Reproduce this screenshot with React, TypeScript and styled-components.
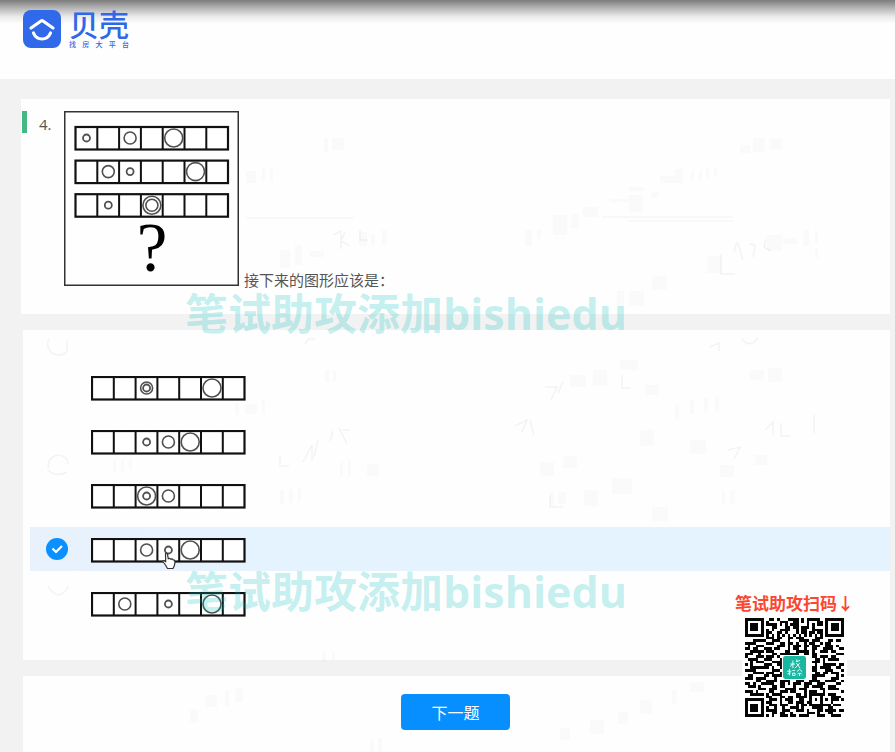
import React, { useState } from "react";
import styled, { createGlobalStyle } from "styled-components";

const GlobalStyle = createGlobalStyle`
  * { box-sizing: border-box; }
  body {
    margin: 0;
    background: #f2f2f2;
    color: #555;
    font-family: "Open Sans", "Noto Sans CJK SC", sans-serif;
  }
`;

const Page = styled.div`
  position: relative;
  min-height: 100vh;
  display: flex;
  flex-direction: column;
  overflow: hidden;
`;

const Header = styled.header`
  height: 79px;
  padding: 10px 23px;
  display: flex;
  align-items: flex-start;
  gap: 8px;
  background: linear-gradient(#7c7c7c 0, #b4b4b4 8px, #ececec 17px, #fefefe 24px);
`;

const Brand = styled.div`
  display: flex;
  flex-direction: column;
  gap: 3px;
  width: 60px;
  color: #2f68e8;
  font-family: "Noto Sans CJK SC", sans-serif;
`;

const BrandName = styled.span`
  font-size: 30px;
  line-height: 27px;
  font-weight: 500;
`;

const BrandLine = styled.span`
  display: flex;
  justify-content: space-between;
  font-size: 7px;
  line-height: 8px;
  font-weight: 500;
`;

const Main = styled.main`
  flex: 1;
  display: flex;
  flex-direction: column;
  gap: 16px;
  padding: 20px 5px 0 23px;
`;

const Card = styled.section`
  background: #fefefe;
`;

const QuestionCard = styled(Card)`
  display: flex;
  align-items: flex-start;
  margin-left: -2px;
  padding: 12px 16px 8px 1px;
  min-height: 215px;
`;

const Marker = styled.span`
  width: 5px;
  height: 22px;
  background: #43b883;
`;

const Number = styled.span`
  width: 37px;
  padding-left: 12px;
  font-size: 15px;
  line-height: 26px;
`;

const Prompt = styled.p`
  margin: 0;
  font-size: 15px;
  line-height: 20px;
  font-family: "Noto Sans CJK SC", sans-serif;

  svg { margin-right: 5px; }
`;

const OptionsCard = styled(Card)`
  padding: 35px 0;
  min-height: 330px;
`;

const Options = styled.div`
  display: flex;
  flex-direction: column;
  gap: 10px;
  padding-left: 7px;
`;

const Option = styled.label<{ $selected: boolean }>`
  display: flex;
  align-items: center;
  height: 44px;
  padding: 3px 0 0 16px;
  gap: 23px;
  cursor: pointer;
  background: ${(p) => (p.$selected ? "linear-gradient(90deg, #e8f1fc, #e5f3ff 25%)" : "transparent")};
`;

const Radio = styled.input`
  appearance: none;
  width: 22px;
  height: 22px;
  margin: 0 0 3px;
  border-radius: 50%;

  &:checked {
    background: #0b91ff
      url("data:image/svg+xml,%3Csvg xmlns='http://www.w3.org/2000/svg' viewBox='0 0 22 22'%3E%3Cpath d='M6.5 10.5l3.5 3.500 6-6' fill='none' stroke='white' stroke-width='2.2'/%3E%3C/svg%3E");
  }
`;

const StripSvg = styled.svg`
  display: block;
`;

const Footer = styled(Card)`
  flex: 1;
  display: flex;
  justify-content: center;
  padding: 18px 2px 20px 0;
`;

const NextButton = styled.button`
  width: 109px;
  height: 36px;
  border: 0;
  border-radius: 4px;
  background: #078fff;
  color: #fff;
  font: 16px "Noto Sans CJK SC", sans-serif;
  cursor: pointer;
`;

const Watermark = styled.div<{ $top: number }>`
  position: absolute;
  top: ${(p) => p.$top}px;
  left: 185px;
  font-size: 43px;
  line-height: 60px;
  font-weight: 700;
  white-space: nowrap;
  color: rgba(0, 193, 188, 0.24);
  pointer-events: none;
`;

const Promo = styled.aside`
  position: absolute;
  top: 592px;
  right: 41px;
  display: flex;
  flex-direction: column;
  align-items: center;
  color: #fb4630;
  font-family: "Noto Sans CJK SC", sans-serif;
  font-size: 17px;
  line-height: 22px;
  font-weight: 700;
`;

const QrFrame = styled.div`
  padding: 4px 3px;
  background: #fff;

  svg { display: block; }
`;

const Cursor = styled.svg`
  position: absolute;
  left: 161px;
  top: 552px;
  pointer-events: none;
`;

const Traces = styled.svg`
  position: absolute;
  left: 0;
  top: 0;
  pointer-events: none;
`;

type Ring = [cell: number, radius: number];
const S = 3.5;
const M = 6;
const L = 9;

const puzzle: Ring[][] = [
  [[0, S], [2, M], [4, L]],
  [[1, M], [2, S], [5, L]],
  [[1, S], [3, M], [3, L]],
];

const options: Ring[][] = [
  [[2, S], [2, M], [5, L]],
  [[2, S], [3, M], [4, L]],
  [[2, S], [2, L], [3, M]],
  [[2, M], [3, S], [4, L]],
  [[1, M], [3, S], [5, L]],
];

function StripShape({ rings }: { rings: Ring[] }) {
  return (
    <g fill="none">
      <rect x="1" y="1" width="152.5" height="22.500" fill="#fff" stroke="#111" strokeWidth="2.200" />
      <path
        d={[1, 2, 3, 4, 5, 6].map((i) => `M${1 + i * 21.8} 1v22`).join("")}
        stroke="#111"
        strokeWidth="2"
      />
      {rings.map(([cell, r], i) => (
        <circle key={i} cx={12 + cell * 21.8} cy="12" r={r} stroke="#505050" strokeWidth={r === S ? 1.8 : 1.6} />
      ))}
    </g>
  );
}

function Puzzle() {
  return (
    <svg width="175" height="175" role="img" aria-label="图形推理题">
      <rect x="0.75" y="0.75" width="173.5" height="173.5" fill="#fefefe" stroke="#333" strokeWidth="1.5" />
      {puzzle.map((rings, i) => (
        <g key={i} transform={`translate(10.500 ${15 + i * 33.6})`}>
          <StripShape rings={rings} />
        </g>
      ))}
      <text x="88" y="160" textAnchor="middle" fontFamily="Liberation Serif, serif" fontSize="69" fill="#000">
        ?
      </text>
    </svg>
  );
}

const qrRows = [
  "#######..##.#...####.#.#####..#######",
  "#.....#.#....###..##.#.#...##.#.....#",
  "#.###.#.####.#.#.###...#.#.##.#.###.#",
  "#.###.#...##...##.##.###.#....#.###.#",
  "#.###.#.#.#..####..#.##..####.#.###.#",
  "#.....#.##..##.#...#.##.##.##.#.....#",
  "#######.#.#.#.#.#.#.#.#.#.#.#.#######",
  "........###.##..##.###....###........",
  "...#####..###...#...####.###...##.##.",
  "####....###..##.##.#..#.##..#.##.....",
  ".#..###.....###.#.###.##.###..###.#..",
  "##.##..###.##...#.##..#..##..####..##",
  "..#####.###....##..#####.#..###.##...",
  "###..#....##.#######..##.##.......###",
  "#...###.###.#............##.###.##...",
  ".####..###...#............##.#.####..",
  "..#.###...####...........###.#.......",
  "#.#....###..##............#..#####.##",
  "..#######.#..#...........##.####..##.",
  "####......###............##...###...#",
  "...####.###..#............##.##.###..",
  ".##....##.####...........#####....#.#",
  "###.####...#.............##.....###..",
  "....##..####.####..###..####..####..#",
  "##.#..#####..##.#.###.###..###....##.",
  ".###.#....##.##...#...##.####..###...",
  ".....###.###...####.###.....##.####..",
  "###.#....##..###.##...#.###..#......#",
  "..#####.#.####.....##.#.######.###...",
  "........##...##.##.####.#...#...####.",
  "#######..###.#.###..##..#.#.#.#.###.#",
  "#.....#.##...#..##.###.##...#...#....",
  "#.###.#..###.###...#.##.########.###.",
  "#.###.#.#..#..#..###.#...####..##....",
  "#.###.#.####..###..###.#...##.####.##",
  "#.....#...##.##..#.....###.#...##....",
  "#######.#.#..###.##.####...###..####.",
];

function QrCode() {
  const d = qrRows
    .map((row, y) => row.split("").map((c, x) => (c === "#" ? `M${x} ${y}h1v1h-1z` : "")).join(""))
    .join("");
  return (
    <svg width="99" height="99" viewBox="0 0 37 37" role="img" aria-label="二维码">
      <path d={d} fill="#050505" shapeRendering="crispEdges" />
      <rect x="13.8" y="13.8" width="9.4" height="9.4" rx="1.2" fill="#fff" />
      <rect x="14.2" y="14.2" width="8.6" height="8.6" rx="0.9" fill="#18b79f" />
      <path
        d="M16.900 17.200h1.800M17.900 15.900v2.800M17.800 17.200l-.9 1M19 16.300l1.600-.4M19.300 15.500l.2.800M19.200 16.800l1.400 2M20.500 16.900l-1.900 1.900M15.800 19.900h1.500M16.600 19v2.500M15.900 20.900l1.200-.4M17.700 19.600h1M17.800 20.600h.9v.9h-.9zM19.400 20l1-.8 1 .9M19.700 20.700h1.400M20.400 20.700v1M19.500 21.200v.2M21.300 21.200v.2"
        fill="none"
        stroke="#e9fffb"
        strokeWidth="0.36"
      />
    </svg>
  );
}

const traceBars: [x: number, y: number, w: number, h: number][] = [
  [324, 138, 4, 14], [332, 138, 12, 12], [246, 171, 10, 12], [262, 168, 3, 14], [270, 168, 3, 14],
  [753, 138, 12, 14], [740, 145, 10, 8], [770, 138, 12, 12],
  [660, 176, 15, 7], [675, 169, 8, 14], [691, 170, 3, 10], [699, 170, 3, 10], [706, 168, 3, 10], [714, 168, 3, 9],
  [629, 187, 15, 4], [651, 192, 7, 6], [610, 199, 18, 3], [629, 195, 14, 17], [583, 207, 15, 10],
  [571, 214, 8, 14], [553, 215, 14, 20], [525, 230, 7, 16], [537, 230, 4, 9],
  [767, 235, 15, 16], [783, 238, 14, 6], [803, 230, 6, 16], [815, 231, 3, 12], [815, 248, 3, 10],
  [707, 256, 14, 17], [652, 276, 15, 14], [617, 291, 7, 15], [629, 291, 15, 15],
  [280, 250, 10, 18], [295, 245, 7, 20], [310, 251, 14, 6], [359, 232, 8, 14], [371, 234, 4, 11], [382, 230, 5, 15],
  [325, 370, 4, 12], [333, 370, 3, 12], [235, 403, 4, 12], [245, 404, 12, 10], [262, 400, 3, 14],
  [113, 460, 3, 12], [121, 459, 3, 12], [129, 458, 3, 12], [340, 462, 3, 14], [348, 461, 3, 14], [367, 464, 12, 12],
  [280, 490, 4, 14], [289, 489, 4, 14], [298, 488, 3, 14],
  [645, 385, 14, 10], [675, 405, 4, 14], [690, 400, 4, 14], [704, 398, 4, 14], [715, 397, 4, 14],
  [570, 375, 16, 12], [593, 370, 14, 16], [620, 360, 18, 10], [750, 370, 14, 10], [768, 368, 14, 14],
  [540, 462, 14, 14], [563, 456, 14, 12], [640, 430, 14, 16], [690, 440, 16, 14], [720, 465, 14, 12], [755, 455, 12, 10],
  [550, 492, 4, 14], [558, 492, 8, 12], [584, 490, 14, 16], [612, 478, 20, 16], [652, 507, 16, 14], [722, 490, 3, 14], [730, 490, 5, 14],
  [190, 710, 8, 12], [205, 695, 12, 12], [225, 690, 4, 16], [235, 688, 8, 14], [322, 652, 4, 10], [332, 651, 3, 10],
  [560, 728, 10, 12], [590, 720, 14, 14], [618, 712, 10, 12], [640, 700, 12, 14], [672, 690, 5, 14], [690, 682, 14, 10],
  [370, 740, 4, 12], [378, 738, 4, 14],
];

function FaintTraces() {
  return (
    <Traces width="895" height="752" aria-hidden="true">
      <g fill="#70708a" fillOpacity="0.03">
        {traceBars.map(([x, y, w, h], i) => (
          <rect key={i} x={x} y={y} width={w} height={h} />
        ))}
      </g>
      <g fill="none" stroke="#666" strokeOpacity="0.07" strokeWidth="1.5">
        <path d="M49 339q-4 7 3 14q9 5 15-2v-11" />
        <path d="M48 468q0-11 9-13q11 1 11 9M48 470q8 8 19 2" />
        <path d="M48 586q4 8 11 9q8-3 9-9" />
        <path d="M246 218h108M602 217h130M629 221h105" strokeWidth="1" />
        <path d="M333 235l8-4v18M345 232l-4 9 9 5M360 230v10h8M333 431l-3 10M339 428l8 16M350 430h-8" />
        <path d="M737 242l-3 10M738 243l5 17M749 245q5-3 6 3l-2 9M766 239l-2 8 7 4M721 254v20h14" />
        <path d="M303 462l9-17v16M318 440l-4 17M280 456v10h9M515 426l12-6-5 12M530 420l4 15" />
        <path d="M545 387h12l-6 13M563 382l-5 11M622 375v13h9M710 347l9-4v8M742 339q8 10 16-1M305 344q3-8 10-4" />
        <path d="M765 430l8-8v13M781 423v13h9M814 415v18M728 450l12-3-6 12M550 495v12h13" />
      </g>
    </Traces>
  );
}

export default function App() {
  const [selected, setSelected] = useState(3);
  return (
    <>
      <GlobalStyle />
      <Page>
        <Header>
          <svg width="38" height="38" viewBox="0 0 38 38" aria-hidden="true">
            <rect width="38" height="38" rx="8" fill="#3069ea" />
            <path d="M8 18l10-7q1-.8 2 0l10 7" fill="none" stroke="#fff" strokeWidth="3.200" strokeLinecap="round" strokeLinejoin="round" />
            <path d="M10.500 23q2.500 6 8.500 6t8.500-6" fill="none" stroke="#fff" strokeWidth="3.200" strokeLinecap="round" />
          </svg>
          <Brand>
            <BrandName>贝壳</BrandName>
            <BrandLine>
              {["找", "房", "大", "平", "台"].map((c) => (
                <span key={c}>{c}</span>
              ))}
            </BrandLine>
          </Brand>
        </Header>
        <Main>
          <QuestionCard>
            <Marker />
            <Number>4.</Number>
            <Prompt>
              <Puzzle />
              接下来的图形应该是：
            </Prompt>
          </QuestionCard>
          <OptionsCard>
            <Options role="radiogroup" aria-label="选项">
              {options.map((rings, i) => (
                <Option key={i} $selected={selected === i}>
                  <Radio
                    type="radio"
                    name="answer"
                    aria-label={`选项 ${i + 1}`}
                    checked={selected === i}
                    onChange={() => setSelected(i)}
                  />
                  <StripSvg width="155" height="25" aria-hidden="true">
                    <StripShape rings={rings} />
                  </StripSvg>
                </Option>
              ))}
            </Options>
          </OptionsCard>
          <Footer>
            <NextButton type="button">下一题</NextButton>
          </Footer>
        </Main>
        <FaintTraces />
        <Cursor width="16" height="18" viewBox="0 0 16 18" aria-hidden="true">
          <path
            d="M4.500 1.500q1.500-1 2 .8l.8 4.500 1-.5 1.500.8 1.400-.3 1 1.100 1.300.2.500 2.400-.8 3.500-1.200 2.500H6.500L4.500 13 1.700 9.500q.5-1.500 2-.4l1 .7z"
            fill="#fff"
            stroke="#333"
            strokeWidth="1.200"
            strokeLinejoin="round"
          />
        </Cursor>
        <Watermark $top={284}>笔试助攻添加bishiedu</Watermark>
        <Watermark $top={562}>笔试助攻添加bishiedu</Watermark>
        <Promo>
          <span>笔试助攻扫码↓</span>
          <QrFrame>
            <QrCode />
          </QrFrame>
        </Promo>
      </Page>
    </>
  );
}
